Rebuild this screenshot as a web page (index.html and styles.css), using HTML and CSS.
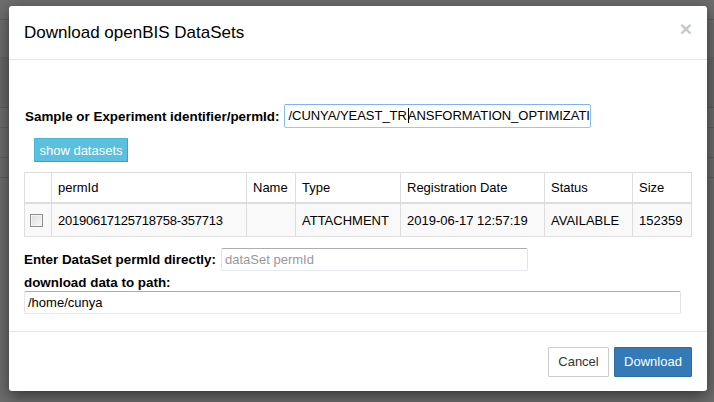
FILE: index.html
```html
<!DOCTYPE html>
<html>
<head>
<meta charset="utf-8">
<link rel="stylesheet" href="styles.css">
</head>
<body>
<div class="backdrop">
  <div class="modal">
    <div class="modal-header">
      <h4 class="modal-title">Download openBIS DataSets</h4>
      <span class="close">×</span>
    </div>
    <div class="modal-body">
      <div class="field-row ident-row">
        <label class="lbl">Sample or Experiment identifier/permId:</label>
        <div class="textbox focused ident-input">/CUNYA/YEAST_TR<span class="caret"></span>ANSFORMATION_OPTIMIZATION</div>
      </div>
      <button class="btn btn-info">show datasets</button>
      <table class="grid">
        <colgroup>
          <col class="c-check"><col class="c-perm"><col class="c-name"><col class="c-type"><col class="c-date"><col class="c-status"><col class="c-size">
        </colgroup>
        <thead>
          <tr><th></th><th>permId</th><th>Name</th><th>Type</th><th>Registration Date</th><th>Status</th><th>Size</th></tr>
        </thead>
        <tbody>
          <tr><td><span class="check"></span></td><td class="num">20190617125718758-357713</td><td></td><td>ATTACHMENT</td><td>2019-06-17 12:57:19</td><td>AVAILABLE</td><td>152359</td></tr>
        </tbody>
      </table>
      <div class="field-row direct-row">
        <label class="lbl">Enter DataSet permId directly:</label>
        <div class="textbox direct-input placeholder">dataSet permId</div>
      </div>
      <label class="lbl path-label">download data to path:</label>
      <div class="textbox path-input">/home/cunya</div>
    </div>
    <div class="modal-footer">
      <button class="btn btn-default">Cancel</button>
      <button class="btn btn-primary">Download</button>
    </div>
  </div>
</div>
</body>
</html>
```

FILE: styles.css
```css
html, body {
  margin: 0;
  padding: 0;
}
body {
  width: 714px;
  height: 402px;
  overflow: hidden;
  font-family: "Liberation Sans", Arial, sans-serif;
  color: #000;
  background:
    linear-gradient(to bottom,
      transparent 0, transparent 19px, #5f5f5f 19px, #5f5f5f 20px,
      transparent 20px, transparent 57px, #626262 57px, #626262 58px,
      #676767 58px, #676767 107px, #5d5d5d 107px, #5d5d5d 108px,
      transparent 108px, transparent 127px, #5f5f5f 127px, #5f5f5f 128px,
      transparent 128px, transparent 157px, #5f5f5f 157px, #5f5f5f 158px,
      transparent 158px, transparent 177px, #5f5f5f 177px, #5f5f5f 178px,
      transparent 178px),
    #6c6c6c;
}
.backdrop {
  padding: 6px 0 0 9px;
}
.modal {
  width: 698px;
  height: 385px;
  background: #fff;
  border-radius: 3px;
  box-shadow: 0 5px 15px rgba(0, 0, 0, 0.5);
  display: flex;
  flex-direction: column;
}
.modal-header {
  height: 54px;
  box-sizing: border-box;
  border-bottom: 1px solid #e5e5e5;
  display: flex;
  align-items: center;
  justify-content: space-between;
  padding: 0 15px 0 15px;
}
.modal-title {
  margin: 0;
  font-size: 17px;
  font-weight: normal;
  color: #000;
  padding-top: 1px;
}
.close {
  font-size: 21px;
  font-weight: bold;
  color: #c8c8c8;
  line-height: 1;
  margin-top: -9px;
}
.modal-body {
  flex: 1;
  padding: 44px 26px 0 15px;
  font-size: 13px;
}
.field-row {
  display: flex;
  align-items: center;
}
.lbl {
  font-weight: bold;
  font-size: 13.4px;
  color: #000;
}
.ident-row .lbl {
  margin-left: 1px;
  margin-right: 5px;
}
.textbox {
  box-sizing: border-box;
  height: 24px;
  line-height: 22px;
  padding: 0 3px;
  border: 1px solid;
  border-color: #abadb3 #e2e3ea #e3e9ef #e2e3ea;
  border-radius: 2px;
  font-size: 13px;
  white-space: nowrap;
  overflow: hidden;
  background: #fff;
}
.focused {
  border-color: #7eb4ea #8ebce8 #9ec6ec #8ebce8;
}
.ident-input {
  width: 307px;
  letter-spacing: -0.04px;
}
.caret {
  display: inline-block;
  width: 1px;
  height: 15px;
  background: #000;
  vertical-align: -3px;
  margin-left: 1px;
  margin-right: -1px;
}
.btn {
  font-family: "Liberation Sans", Arial, sans-serif;
  font-size: 13px;
  box-sizing: border-box;
  border: 1px solid;
  cursor: default;
}
.btn-info {
  display: block;
  margin: 10px 0 10px 10px;
  width: 94px;
  height: 24px;
  padding: 0;
  background: #5bc0de;
  border-color: #46b8da;
  border-bottom-color: #3aa6c6;
  border-right-color: #3aa6c6;
  color: #fff;
  border-radius: 1px;
}
.grid {
  border-collapse: collapse;
  table-layout: fixed;
  width: 667px;
  font-size: 13px;
  border: 1px solid #ddd;
}
.c-check { width: 27px; }
.c-perm { width: 195px; }
.c-name { width: 49px; }
.c-type { width: 105px; }
.c-date { width: 144px; }
.c-status { width: 88px; }
.c-size { width: 59px; }
.grid th, .grid td {
  border: 1px solid #ddd;
  text-align: left;
  font-weight: normal;
  padding: 0 6px;
  white-space: nowrap;
  overflow: hidden;
}
.grid th {
  height: 29px;
  border-bottom: 2px solid #ddd;
}
.grid td {
  height: 32px;
  background: #f9f9f9;
}
.grid td.num {
  letter-spacing: -0.25px;
}
.grid td:first-child {
  padding: 0 0 0 5px;
}
.check {
  display: block;
  width: 13px;
  height: 13px;
  box-sizing: border-box;
  border: 1px solid #8e8f8f;
  background: linear-gradient(135deg, #dcdcdc, #f8f8f8);
  box-shadow: inset 0 0 0 1px #f4f4f4;
  margin-top: 1px;
}
.direct-row {
  margin-top: 11px;
}
.direct-row .lbl {
  margin-right: 5px;
}
.direct-input {
  width: 307px;
  height: 23px;
  line-height: 21px;
}
.placeholder {
  color: #999;
}
.path-label {
  display: block;
  height: 20px;
  line-height: 21px;
  padding-top: 1px;
  box-sizing: border-box;
}
.path-input {
  width: 657px;
  height: 23px;
  line-height: 21px;
}
.modal-footer {
  height: 60px;
  box-sizing: border-box;
  border-top: 1px solid #e5e5e5;
  display: flex;
  justify-content: flex-end;
  align-items: center;
  gap: 5px;
  padding: 0 15px 0 0;
}
.btn-default {
  width: 61px;
  height: 30px;
  background: #fff;
  border-color: #ccc;
  color: #333;
  border-radius: 1px;
}
.btn-primary {
  width: 78px;
  height: 30px;
  background: #337ab7;
  border-color: #2e6da4;
  color: #fff;
  border-radius: 1px;
}
```
